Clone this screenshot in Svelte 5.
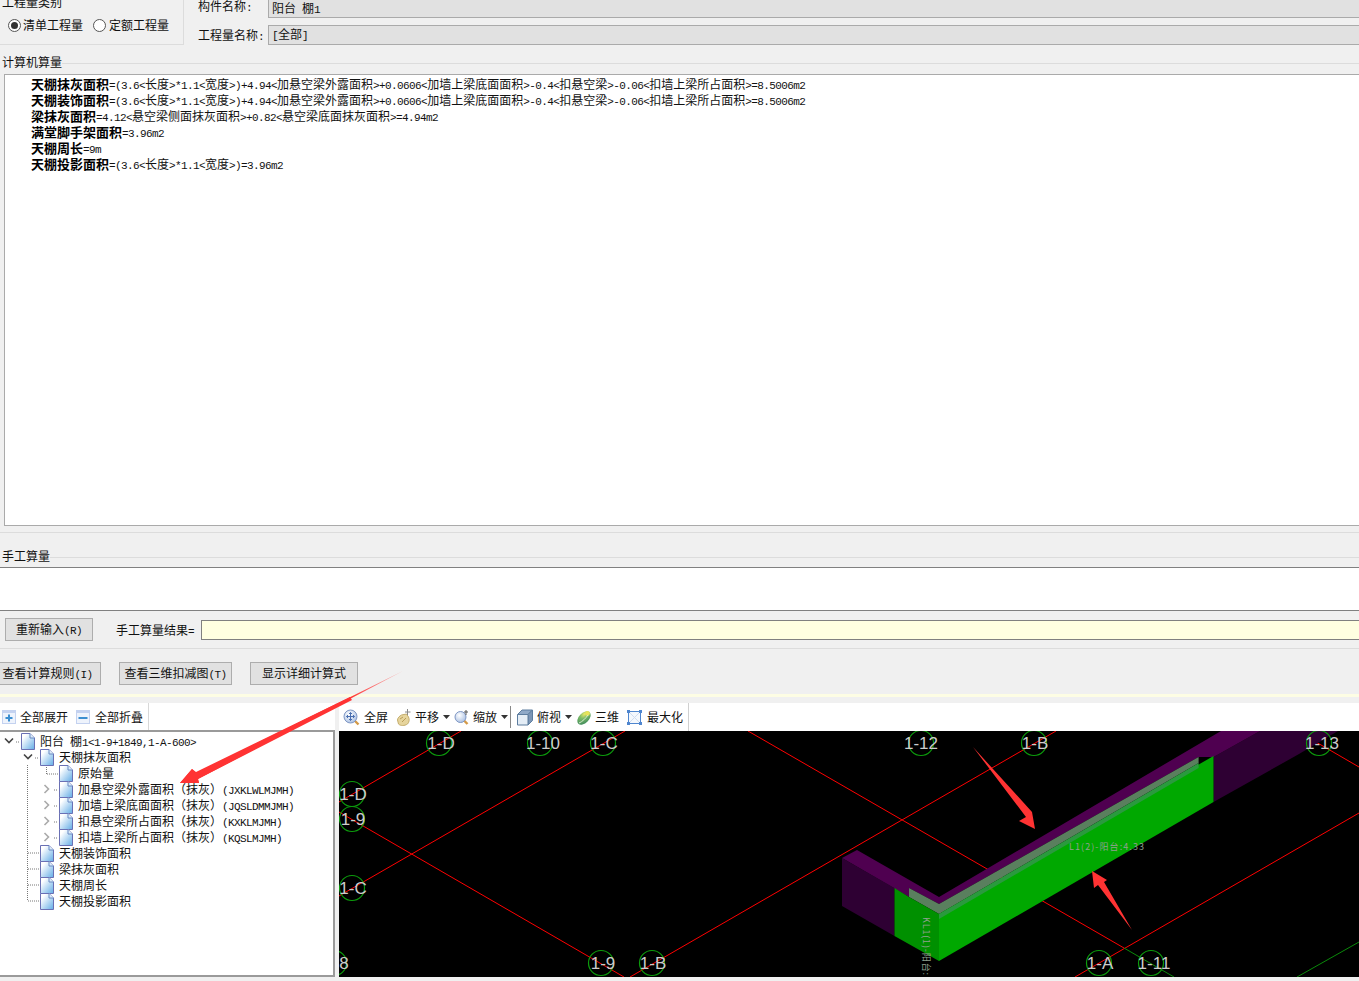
<script>
	const formulas = [
		['天棚抹灰面积', '=(3.6<长度>*1.1<宽度>)+4.94<加悬空梁外露面积>+0.0606<加墙上梁底面面积>-0.4<扣悬空梁>-0.06<扣墙上梁所占面积>=8.5006m2'],
		['天棚装饰面积', '=(3.6<长度>*1.1<宽度>)+4.94<加悬空梁外露面积>+0.0606<加墙上梁底面面积>-0.4<扣悬空梁>-0.06<扣墙上梁所占面积>=8.5006m2'],
		['梁抹灰面积', '=4.12<悬空梁侧面抹灰面积>+0.82<悬空梁底面抹灰面积>=4.94m2'],
		['满堂脚手架面积', '=3.96m2'],
		['天棚周长', '=9m'],
		['天棚投影面积', '=(3.6<长度>*1.1<宽度>)=3.96m2']
	];

	const tree = [
		{ depth: 0, twist: 'open', label: '阳台 棚1<1-9+1849,1-A-600>' },
		{ depth: 1, twist: 'open', label: '天棚抹灰面积' },
		{ depth: 2, label: '原始量' },
		{ depth: 2, twist: 'closed', label: '加悬空梁外露面积（抹灰）(JXKLWLMJMH)' },
		{ depth: 2, twist: 'closed', label: '加墙上梁底面面积（抹灰）(JQSLDMMJMH)' },
		{ depth: 2, twist: 'closed', label: '扣悬空梁所占面积（抹灰）(KXKLMJMH)' },
		{ depth: 2, twist: 'closed', label: '扣墙上梁所占面积（抹灰）(KQSLMJMH)' },
		{ depth: 1, label: '天棚装饰面积' },
		{ depth: 1, label: '梁抹灰面积' },
		{ depth: 1, label: '天棚周长' },
		{ depth: 1, label: '天棚投影面积' }
	];

	const axes = [
		{ x: 439, y: 743, t: '1-D', lx: 441 },
		{ x: 540, y: 743, t: '1-10', lx: 543 },
		{ x: 603, y: 743, t: '1-C', lx: 604 },
		{ x: 352, y: 794, t: '1-D' },
		{ x: 352, y: 819, t: '1-9' },
		{ x: 352, y: 888, t: '1-C' },
		{ x: 601, y: 963, t: '1-9', lx: 603 },
		{ x: 652, y: 963, t: '1-B', lx: 653 },
		{ x: 334, y: 963, t: '8', lx: 344 },
		{ x: 921, y: 743, t: '1-12', lx: 921 },
		{ x: 1034, y: 743, t: '1-B', lx: 1035 },
		{ x: 1319, y: 743, t: '1-13', lx: 1322 },
		{ x: 1099, y: 963, t: '1-A', lx: 1100 },
		{ x: 1151, y: 963, t: '1-11', lx: 1154 }
	];

	const redLines = [
		[339, 802, 461, 731],
		[339, 896, 625, 731],
		[339, 812, 624, 977],
		[630, 977, 1056, 731],
		[748, 731, 1124, 948],
		[1297, 731, 1359, 767],
		[1075, 977, 1359, 813]
	];

	// split latin runs out so they can use a narrower face than the CJK text
	function runs(text) {
		return text.split(/([\x20-\x7e]+)/).filter(Boolean).map((s) => ({ s, asc: /^[\x20-\x7e]/.test(s) }));
	}
</script>

{#snippet mixed(text)}
	{#each runs(text) as r}{#if r.asc}<span class="asc">{r.s}</span>{:else}{r.s}{/if}{/each}
{/snippet}

{#snippet doc()}
	<svg class="doc" width="14" height="17" viewBox="0 0 14 17">
		<path d="M.5.5H9L13.5 5V16.5H.5Z" fill="url(#docfill)" stroke="#6a70b4" />
		<path d="M9 .5V5H13.5" fill="#dcecf8" stroke="#6a8ac4" />
	</svg>
{/snippet}

{#snippet caret()}
	<svg class="caret" width="7" height="4" viewBox="0 0 7 4"><path d="M0 0H7L3.5 4Z" fill="#333" /></svg>
{/snippet}

<div class="page">
	<svg class="defs" width="0" height="0">
		<defs>
			<linearGradient id="docfill" x1="0" y1="0" x2="1" y2="1">
				<stop offset="0.2" stop-color="#ffffff" />
				<stop offset="1" stop-color="#62ace6" />
			</linearGradient>
			<linearGradient id="tail" gradientUnits="userSpaceOnUse" x1="403" y1="671" x2="350" y2="698">
				<stop offset="0" stop-color="#f66" stop-opacity="0.5" />
				<stop offset="1" stop-color="#f33" />
			</linearGradient>
			<radialGradient id="lens" cx="0.4" cy="0.35" r="0.7">
				<stop offset="0" stop-color="#ffffff" />
				<stop offset="1" stop-color="#a9bfe2" />
			</radialGradient>
			<radialGradient id="ball" cx="0.7" cy="0.25" r="0.85">
				<stop offset="0" stop-color="#eeea66" />
				<stop offset="0.4" stop-color="#7cbb68" />
				<stop offset="1" stop-color="#3f8a5c" />
			</radialGradient>
		</defs>
	</svg>

	<section class="top">
		<div class="kind">
			<div class="legend">工程量类别</div>
			<div class="radios">
				<span class="radio on"></span><span class="rlabel">清单工程量</span>
				<span class="radio second"></span><span class="rlabel">定额工程量</span>
			</div>
		</div>
		<div class="fields">
			<div class="field first">
				<span class="flabel name1">{@render mixed('构件名称:')}</span>
				<div class="value">{@render mixed('阳台 棚1')}</div>
			</div>
			<div class="field">
				<span class="flabel">{@render mixed('工程量名称:')}</span>
				<div class="value">{@render mixed('[全部]')}</div>
			</div>
		</div>
	</section>

	<div class="title t1"><span>计算机算量</span><i></i></div>

	<div class="formula">
		{#each formulas as [name, rest]}
			<div class="fline"><b>{name}</b>{@render mixed(rest)}</div>
		{/each}
	</div>

	<div class="title t2"><span>手工算量</span><i></i></div>
	<div class="manual"></div>

	<div class="inputrow">
		<button class="btn redo">{@render mixed('重新输入(R)')}</button>
		<span class="rlabel resultlabel">{@render mixed('手工算量结果=')}</span>
		<div class="result"></div>
	</div>

	<div class="btnrow">
		<button class="btn b1">{@render mixed('查看计算规则(I)')}</button>
		<button class="btn b2">{@render mixed('查看三维扣减图(T)')}</button>
		<button class="btn b3">显示详细计算式</button>
	</div>

	<div class="strip"></div>

	<div class="lower">
		<div class="left">
			<div class="bar leftbar">
				<span class="tool">
					<svg width="14" height="14" viewBox="0 0 14 14"><rect width="14" height="14" fill="#c4d2f0" /><rect x="1" y="3" width="12" height="10" fill="#eef3fc" /><path d="M7 4.5v7M3.5 8h7" stroke="#3b8ed0" stroke-width="2" /></svg>
					全部展开
				</span>
				<span class="tool second">
					<svg width="14" height="14" viewBox="0 0 14 14"><rect width="14" height="14" fill="#c4d2f0" /><rect x="1" y="3" width="12" height="10" fill="#eef3fc" /><path d="M2.5 8h9" stroke="#3b8ed0" stroke-width="2" /></svg>
					全部折叠
				</span>
			</div>
			<div class="tree">
				<svg class="links" width="60" height="180" viewBox="0 0 60 180">
					<path d="M27.5 34V170M28 170H39M28 154H39M28 138H39M28 122H39M46.5 34V43M47 43H58M16 11H20M35 27H39M54 59H58M54 75H58M54 91H58M54 107H58" stroke="#777" stroke-dasharray="1 1" fill="none" />
				</svg>
				{#each tree as node}
					<div class="node" style="padding-left: {node.depth * 19 + 2}px">
						<span class="twist">
							{#if node.twist === 'open'}
								<svg width="12" height="8" viewBox="0 0 12 8"><path d="M2 1.5 6 5.5 10 1.5" fill="none" stroke="#444" stroke-width="1.6" /></svg>
							{:else if node.twist === 'closed'}
								<svg width="8" height="12" viewBox="0 0 8 12"><path d="M1.5 2 5.5 6 1.5 10" fill="none" stroke="#aaa" stroke-width="1.6" /></svg>
							{/if}
						</span>
						{@render doc()}
						<span class="nlabel">{@render mixed(node.label)}</span>
					</div>
				{/each}
			</div>
		</div>

		<div class="right">
			<div class="bar rightbar">
				<span class="tool">
					<svg width="17" height="17" viewBox="0 0 17 17"><path d="M11 11 15.5 15.5" stroke="#d49a48" stroke-width="2.4" /><circle cx="7.5" cy="7.5" r="6.5" fill="url(#lens)" stroke="#7f97c4" /><path d="M7.5 3.5v8M3.5 7.5h8M6 5l1.5-1.5L9 5M6 10l1.5 1.5L9 10M5 6 3.5 7.5 5 9M10 6l1.5 1.5L10 9" fill="none" stroke="#4a6fb0" /></svg>
					全屏
				</span>
				<span class="tool">
					<svg width="14" height="17" viewBox="0 0 14 17"><path d="M.5 11c0-2 2-4 4-5l5-1 2 3c1 2 1 5-1 7-3 2-7 2-9 0z" fill="#e6d49c" stroke="#c4ad6c" /><path d="M3 10 6 8M5 13 9 9" stroke="#b89c58" /><path d="M10.5 0v6M8 3h5.5" stroke="#8a8a8a" /></svg>
					平移 {@render caret()}
				</span>
				<span class="tool zoomtool">
					<svg width="15" height="17" viewBox="0 0 15 17"><path d="M9.5 11 13.5 15" stroke="#d49a48" stroke-width="2.4" /><circle cx="6.5" cy="8" r="5.5" fill="url(#lens)" stroke="#7f97c4" /><path d="M12 1v5M10 3h4" stroke="#555" /></svg>
					缩放 {@render caret()}
				</span>
				<span class="sep"></span>
				<span class="tool">
					<svg width="16" height="17" viewBox="0 0 16 17"><path d="M.5 5.5 5 1H15.5L11 5.5Z" fill="#8fa9c8" stroke="#5d7d9f" /><path d="M11 5.5 15.5 1V11.5L11 16Z" fill="#7c96b6" stroke="#5d7d9f" /><path d="M.5 5.5H11V16H.5Z" fill="#e4edf6" stroke="#5d7d9f" /></svg>
					俯视 {@render caret()}
				</span>
				<span class="tool balltool">
					<svg width="14" height="17" viewBox="0 0 14 17"><ellipse cx="7" cy="9" rx="8" ry="5" transform="rotate(-45 7 9)" fill="url(#ball)" /><circle cx="10.5" cy="4.5" r="2.4" fill="#e8e35a" /><path d="M2 14C5 13 9 9 11 6" fill="none" stroke="#d8ecd0" /></svg>
					三维
				</span>
				<span class="tool maxtool">
					<svg width="15" height="15" viewBox="0 0 15 15"><rect x="1.5" y="1.5" width="12" height="12" fill="#f4f8fd" stroke="#4f86cf" /><path d="M3 3 12 12M12 3 3 12" stroke="#cfdcf0" /><path d="M0 0h3v3H0zM12 0h3v3h-3zM0 12h3v3H0zM12 12h3v3h-3z" fill="#4f86cf" /></svg>
					最大化
				</span>
			</div>

			<svg class="cad" width="1020" height="246" viewBox="339 731 1020 246">
				{#each redLines as [x1, y1, x2, y2]}
					<line {x1} {y1} {x2} {y2} stroke="#f00" />
				{/each}
				<line x1="1124" y1="948" x2="1174" y2="977" stroke="#0a8a0a" />
				<line x1="1297" y1="977" x2="1359" y2="942" stroke="#0a8a0a" />

				<!-- beam, drawn back to front -->
				<path d="M1213.5 757 1260 731H1338L1299 754 1213.5 802Z" fill="#2e0033" />
				<path d="M842 858 857 850 939 897 1221 731H1260L1213.5 757H1198.6L939 904 909 888V897Z" fill="#4f0050" />
				<path d="M842 858 894.5 888V936L842 906Z" fill="#2e0033" />
				<path d="M909 888 939 904 1198.6 757V763L939 914 909 897Z" fill="#5a7f5e" />
				<path d="M894.5 888 909 897 939 914V961L894.5 936Z" fill="#009000" />
				<path d="M939 914 1213.5 756V802L939 961Z" fill="#00a800" />
				<path d="M939 914 1198.6 763 1198.6 768 939 919Z" fill="#2a9a3e" />

				<text class="beamlabel" x="1069" y="850" textLength="75">L1(2)-阳台:4.33</text>
				<text class="beamlabel" transform="translate(923 917) rotate(90)" textLength="58">KL1(1)-阳台:</text>

				{#each axes as a}
					<circle cx={a.x} cy={a.y} r="12.5" fill="none" stroke="#0c9c0c" stroke-width="1.2" />
					<text class="axis" x={a.lx ?? a.x + 1} y={a.y + 6}>{a.t}</text>
				{/each}
			</svg>
		</div>
	</div>

	<svg class="arrows" width="1359" height="981" viewBox="0 0 1359 981">
		<path d="M403 671 196 773 192 769 180 783 199 783 198 779Z" fill="url(#tail)" />
		<path d="M350 697 196 772 192 769 180 783 199 783 198 779 352 700Z" fill="#f33" />
		<path d="M973 747 1032 812 1035 829 1019 821 1026 817Z" fill="#f33" />
		<path d="M1132 930 1104 882 1107 880 1092 871 1094 888 1098 885Z" fill="#f33" />
	</svg>
</div>

<style>
	:global(body) {
		margin: 0;
		background: #f0f0f0;
	}

	.page {
		position: relative;
		width: 100%;
		height: 981px;
		overflow: hidden;
		background: #f0f0f0;
		color: #111;
		font: 12px/16px "Noto Sans CJK SC", "Liberation Sans", sans-serif;
	}

	.defs {
		position: absolute;
	}

	.asc {
		font-family: "Liberation Mono", monospace;
		font-size: 11px;
		line-height: 0;
		letter-spacing: -0.6px;
		white-space: pre;
	}

	.top {
		display: flex;
		height: 52px;
	}

	.kind {
		width: 183px;
		height: 44px;
		border-right: 1px solid #dcdcdc;
		border-bottom: 1px solid #dcdcdc;
		flex: none;
	}

	.legend {
		margin: -6px 0 0 2px;
		height: 16px;
	}

	.radios {
		display: flex;
		align-items: center;
		margin: 7px 0 0 8px;
	}

	.radio {
		width: 11px;
		height: 11px;
		border: 1px solid #555;
		border-radius: 50%;
		background: #fff;
		flex: none;
		margin-right: 2px;
		position: relative;
	}

	.radio.second {
		margin-right: 3px;
	}

	.radio.on::after {
		content: "";
		position: absolute;
		inset: 2px;
		border-radius: 50%;
		background: #333;
	}

	.rlabel {
		margin-right: 10px;
	}

	.fields {
		flex: 1;
		margin-left: 14px;
	}

	.field {
		display: flex;
		align-items: center;
		height: 20px;
	}

	.field.first {
		height: 18px;
		margin-bottom: 7px;
	}

	.flabel {
		width: 70px;
		flex: none;
	}

	.name1 {
		margin-top: -6px;
	}

	.value {
		flex: 1;
		height: 100%;
		background: #e1e1e1;
		border-left: 1px solid #aaa;
		border-top: 1px solid #aaa;
		border-bottom: 1px solid #aaa;
		box-sizing: border-box;
		padding-left: 3px;
		line-height: 16px;
	}

	.first .value {
		border-top: none;
	}

	.title {
		display: flex;
		align-items: center;
		padding-left: 2px;
	}

	.title span {
		margin-top: -2px;
	}

	.title i {
		flex: 1;
		height: 1px;
		background: #dcdcdc;
	}

	.t1 {
		height: 22px;
	}

	.t2 {
		height: 35px;
		padding-top: 14px;
		margin-top: 6px;
		border-top: 1px solid #dcdcdc;
		box-sizing: border-box;
	}

	.formula {
		height: 452px;
		margin-left: 4px;
		box-sizing: border-box;
		background: #fff;
		border: 1px solid #aaa;
		border-right: none;
		padding: 1px 0 0 26px;
	}

	.fline {
		height: 16px;
		white-space: nowrap;
	}

	.fline b {
		font-weight: 700;
		font-size: 13px;
		color: #000;
	}

	.manual {
		height: 44px;
		box-sizing: border-box;
		background: #fff;
		border-top: 1px solid #808080;
		border-bottom: 1px solid #808080;
	}

	.inputrow {
		display: flex;
		align-items: center;
		height: 38px;
		box-sizing: border-box;
		border-bottom: 1px solid #dcdcdc;
		padding: 0 0 0 5px;
	}

	.btn {
		height: 23px;
		box-sizing: border-box;
		padding: 0 0 2px;
		background: #e1e1e1;
		border: 1px solid #adadad;
		border-radius: 0;
		font: inherit;
		color: inherit;
		white-space: nowrap;
	}

	.redo {
		width: 88px;
	}

	.resultlabel {
		margin: 0 7px 0 23px;
		white-space: nowrap;
	}

	.result {
		flex: 1;
		height: 20px;
		box-sizing: border-box;
		background: #ffffe1;
		border: 1px solid #808080;
		border-right: none;
	}

	.btnrow {
		display: flex;
		gap: 18px;
		height: 45px;
		padding-top: 13px;
		box-sizing: border-box;
	}

	.b1 {
		width: 107px;
		margin-left: -6px;
	}

	.b2 {
		width: 113px;
	}

	.b3 {
		width: 108px;
	}

	.strip {
		height: 3px;
		background: #fdfde4;
		margin-bottom: 6px;
	}

	.lower {
		display: flex;
		height: 274px;
	}

	.left {
		width: 335px;
		flex: none;
		display: flex;
		flex-direction: column;
	}

	.bar {
		display: flex;
		align-items: center;
		height: 28px;
		background: #fff;
		box-sizing: border-box;
	}

	.leftbar {
		gap: 8px;
		padding-left: 2px;
		position: relative;
	}

	.leftbar::after {
		content: "";
		position: absolute;
		left: 148px;
		top: 0;
		bottom: 0;
		width: 1px;
		background: #d8d8d8;
	}

	.tool {
		display: inline-flex;
		align-items: center;
		gap: 4px;
		white-space: nowrap;
		color: #111;
	}

	.tool.second {
		gap: 5px;
	}

	.tree {
		position: relative;
		flex: 1;
		background: #fff;
		box-sizing: border-box;
		border-top: 2px solid #9a9a9a;
		border-right: 2px solid #9a9a9a;
		border-bottom: 2px solid #9a9a9a;
		margin-top: -1px;
		padding-top: 1px;
	}

	.links {
		position: absolute;
		left: 0;
		top: -1px;
	}

	.node {
		position: relative;
		display: flex;
		align-items: center;
		height: 16px;
		white-space: nowrap;
	}

	.twist {
		display: inline-flex;
		justify-content: center;
		width: 14px;
		flex: none;
		margin-right: 5px;
	}

	.doc {
		flex: none;
		margin-right: 5px;
	}

	.right {
		flex: 1;
		min-width: 0;
		margin-left: 4px;
		display: flex;
		flex-direction: column;
	}

	.rightbar {
		padding-left: 4px;
		gap: 9px;
	}

	.zoomtool {
		margin-left: -5px;
	}

	.balltool {
		margin-left: -4px;
	}

	.maxtool {
		margin-left: -1px;
		gap: 5px;
		padding-right: 5px;
		border-right: 1px solid #d0d0d0;
		height: 100%;
	}

	.sep {
		width: 1px;
		height: 22px;
		background: #888;
		margin-left: -7px;
		margin-right: -3px;
	}

	.cad {
		display: block;
		background: #000;
	}

	.axis {
		font: 17px "Liberation Sans", sans-serif;
		fill: #ccc;
		text-anchor: middle;
	}

	.beamlabel {
		font: 9px "Noto Sans CJK SC", sans-serif;
		fill: #8fa08f;
	}

	.arrows {
		position: absolute;
		left: 0;
		top: 0;
		pointer-events: none;
	}
</style>
